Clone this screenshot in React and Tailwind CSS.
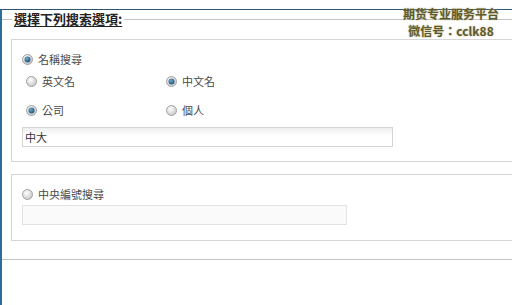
import React from 'react';

const cjk = '"Noto Sans CJK TC", "Noto Sans CJK SC", "Liberation Sans", sans-serif';

function Radio({ checked }) {
  return (
    <svg width="11" height="11" viewBox="0 0 11 11" className="shrink-0">
      <defs>
        <radialGradient id="roff" cx="40%" cy="35%" r="70%">
          <stop offset="0%" stopColor="#ffffff" />
          <stop offset="100%" stopColor="#c4c4c4" />
        </radialGradient>
        <radialGradient id="ron" cx="40%" cy="35%" r="70%">
          <stop offset="0%" stopColor="#6fa7cf" />
          <stop offset="100%" stopColor="#1d4f74" />
        </radialGradient>
      </defs>
      <circle cx="5.5" cy="5.5" r="5" fill="url(#roff)" stroke="#a3a3a3" strokeWidth="1" />
      {checked && <circle cx="5.5" cy="5.5" r="3" fill="url(#ron)" />}
    </svg>
  );
}

function Option({ checked, label }) {
  return (
    <label className="flex items-center gap-[5px] text-[11px] leading-[14px] text-[#4a4a4a]">
      <Radio checked={checked} />
      <span>{label}</span>
    </label>
  );
}

export default function App() {
  return (
    <div className="relative w-[512px] h-[305px] overflow-hidden bg-white" style={{ fontFamily: cjk }}>
      <div className="pt-[9px] h-full">
        <div className="h-full border-t border-t-[#2f5670] border-l-2 border-l-[#2c6e99]">
          <fieldset className="mt-[1px] border-y border-x-0 border-[#c4c4c4] pl-[9px] pt-[12px] pb-[18px] m-0 min-w-0">
            <legend className="ml-[1px] px-[2px] text-[13px] leading-[16px] text-[#222] font-semibold underline underline-offset-2">
              選擇下列搜索選項:
            </legend>

            <div className="w-[540px] border border-[#d6d6d6] pl-[10px] pt-[12px] pb-[14px]">
              <Option checked label="名稱搜尋" />
              <div className="pl-[4px] mt-[8px] grid grid-cols-[140px_140px] gap-y-[15px]">
                <Option label="英文名" />
                <Option checked label="中文名" />
                <Option checked label="公司" />
                <Option label="個人" />
              </div>
              <div className="mt-[10px] w-[371px] h-[20px] border border-[#d4d4d4] bg-gradient-to-b from-[#eeeeee] to-white to-40% px-[2px] flex items-center text-[11px] text-[#333]">
                中大
              </div>
            </div>

            <div className="mt-[12px] w-[540px] border border-[#d6d6d6] pl-[10px] pt-[12px] pb-[15px]">
              <Option label="中央編號搜尋" />
              <div className="mt-[4px] w-[325px] h-[20px] border border-[#e2e2e2] bg-[#fafafa]" />
            </div>
          </fieldset>
        </div>
      </div>

      <div className="absolute top-[6px] left-[403px] flex flex-col items-center text-[12px] leading-[16px] font-bold text-[#5f5a2c] [text-shadow:0_0_2px_#b9b48a]">
        <span>期货专业服务平台</span>
        <span className="mt-[1px]">微信号：cclk88</span>
      </div>
    </div>
  );
}
